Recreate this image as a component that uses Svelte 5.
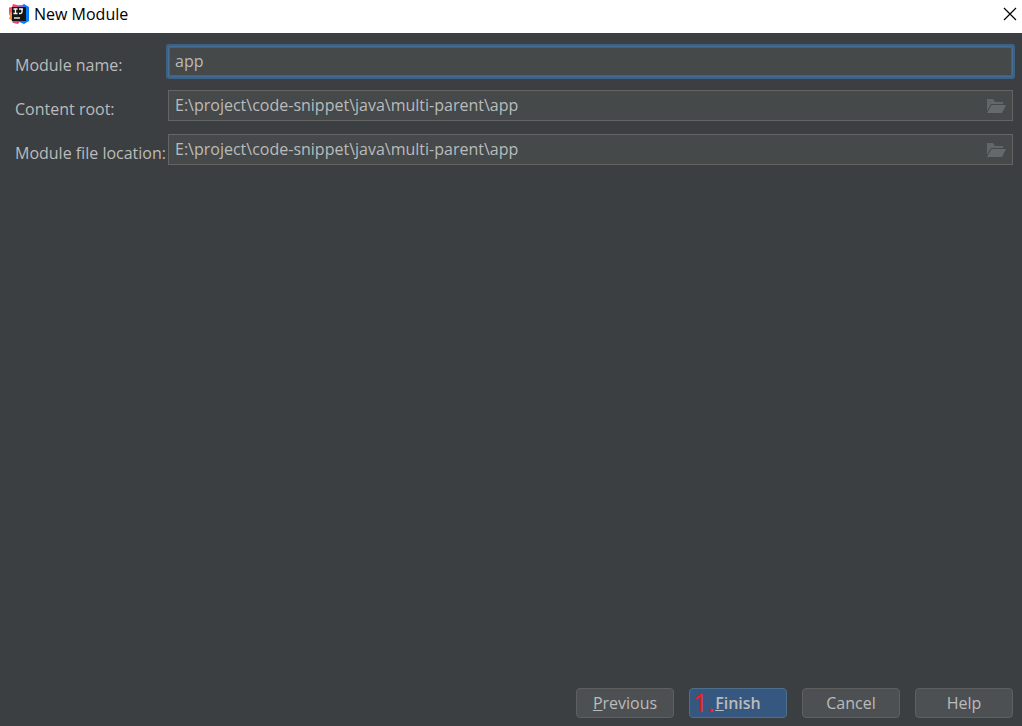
<script>
  let moduleName = $state('app');
  let contentRoot = $state('E:\\project\\code-snippet\\java\\multi-parent\\app');
  let fileLocation = $state('E:\\project\\code-snippet\\java\\multi-parent\\app');
</script>

{#snippet folder()}
  <svg width="20" height="16" viewBox="0 0 20 16" aria-hidden="true">
    <path d="M1 1h6l2 3h8v2H5L1 13z" fill="#616669" />
    <path d="M5.500 7H20l-4 8H1z" fill="#65696c" />
  </svg>
{/snippet}

<div class="dialog">
  <!-- Title bar -->
  <header class="titlebar">
    <svg class="logo" width="20" height="20" viewBox="0 0 20 20" aria-hidden="true">
      <path d="M0 3.500 3 3l1-3 8 2-3 9-7 2-2-3z" fill="#f5496b" />
      <path d="M0 9l3-1 4 9-4-1-3-1 1-3z" fill="#f98b32" />
      <path d="M2 15l5-1 5 2-3 4-5-1z" fill="#e2467c" />
      <path d="M12 2l3-2 5 3v14l-5 3-7-3 6-6z" fill="#087cfa" />
      <path d="M8 2l4-1 4 2-5 3z" fill="#8f63b8" />
      <rect x="3" y="3" width="14" height="14" fill="#141414" />
      <path d="M4.500 5h4M6.500 5v4.500M4.500 9.500h4M10 5h4M13 5v3q0 1.500-1.500 1.500H10" fill="none" stroke="#fff" stroke-width="1.300" />
      <path d="M5 14h6" stroke="#fff" stroke-width="1.300" />
    </svg>
    <h1>New Module</h1>
    <button class="close" type="button" aria-label="Close">
      <svg width="14" height="14" viewBox="0 0 14 14" aria-hidden="true">
        <path d="M1 1l12 12M13 1L1 13" stroke="#000" stroke-width="1.200" />
      </svg>
    </button>
  </header>

  <form class="content" onsubmit={(e) => e.preventDefault()}>
    <div class="fields">
      <label for="module-name">Module name:</label>
      <div class="field active">
        <input id="module-name" type="text" bind:value={moduleName} spellcheck="false" />
      </div>

      <label for="content-root">Content root:</label>
      <div class="field">
        <input id="content-root" type="text" bind:value={contentRoot} spellcheck="false" />
        <button class="browse" type="button" aria-label="Browse content root">{@render folder()}</button>
      </div>

      <label for="file-location">Module file location:</label>
      <div class="field">
        <input id="file-location" type="text" bind:value={fileLocation} spellcheck="false" />
        <button class="browse" type="button" aria-label="Browse module file location">{@render folder()}</button>
      </div>
    </div>

    <!-- Wizard buttons -->
    <footer class="actions">
      <button class="btn" type="button"><u>P</u>revious</button>
      <div class="step">
        <button class="btn primary" type="submit"><u>F</u>inish</button>
        <span class="marker">1.</span>
      </div>
      <button class="btn" type="button">Cancel</button>
      <button class="btn" type="button">Help</button>
    </footer>
  </form>
</div>

<style>
  :global(body) {
    background: #3c3f41;
  }

  .dialog {
    display: flex;
    flex-direction: column;
    min-height: 100vh;
    color: #bbbbbb;
    background: #3c3f41;
    font-family: 'Open Sans', 'Noto Sans', sans-serif;
    font-size: 16px;
    line-height: 20px;
  }

  .titlebar {
    display: flex;
    align-items: center;
    height: 33px;
    padding: 0 5px 5px 9px;
    box-sizing: border-box;
    background: #ffffff;
    color: #000000;
  }

  h1 {
    flex: 1;
    margin: 0 0 0 5px;
    font-size: 16px;
    font-weight: 400;
  }

  .close,
  .browse {
    display: flex;
    padding: 0;
    border: 0;
    background: none;
    cursor: pointer;
  }

  .content {
    display: flex;
    flex: 1;
    flex-direction: column;
    justify-content: space-between;
    padding: 13px 9px 8px 15px;
  }

  .fields {
    display: grid;
    grid-template-columns: 153px 1fr;
    row-gap: 13px;
    align-items: center;
  }

  label {
    padding-top: 6px;
    white-space: nowrap;
  }

  .field {
    display: flex;
    align-items: center;
    height: 31px;
    padding: 0 6px;
    box-sizing: border-box;
    border: 1px solid #646464;
    background: #45494a;
  }

  .field.active {
    border-color: #466d94;
    border-radius: 1px;
    box-shadow: 0 0 0 2px #3d6185, inset 0 0 0 1px #3d6185;
  }

  input {
    flex: 1;
    min-width: 0;
    padding: 0 0 2px;
    border: 0;
    outline: 0;
    background: transparent;
    color: inherit;
    font: inherit;
  }

  .actions {
    display: flex;
    justify-content: flex-end;
    gap: 15px;
  }

  .btn {
    width: 98px;
    height: 30px;
    padding: 0;
    border: 1px solid #5e6060;
    border-radius: 4px;
    background: #4c5052;
    color: inherit;
    font: inherit;
    cursor: pointer;
  }

  .btn.primary {
    border-color: #4c708c;
    background: #365880;
    font-weight: 600;
  }

  .step {
    position: relative;
  }

  /* Red step number drawn over the button */
  .marker {
    position: absolute;
    top: 4px;
    left: 4px;
    color: #ff1a1a;
    font-size: 26px;
    pointer-events: none;
  }
</style>
